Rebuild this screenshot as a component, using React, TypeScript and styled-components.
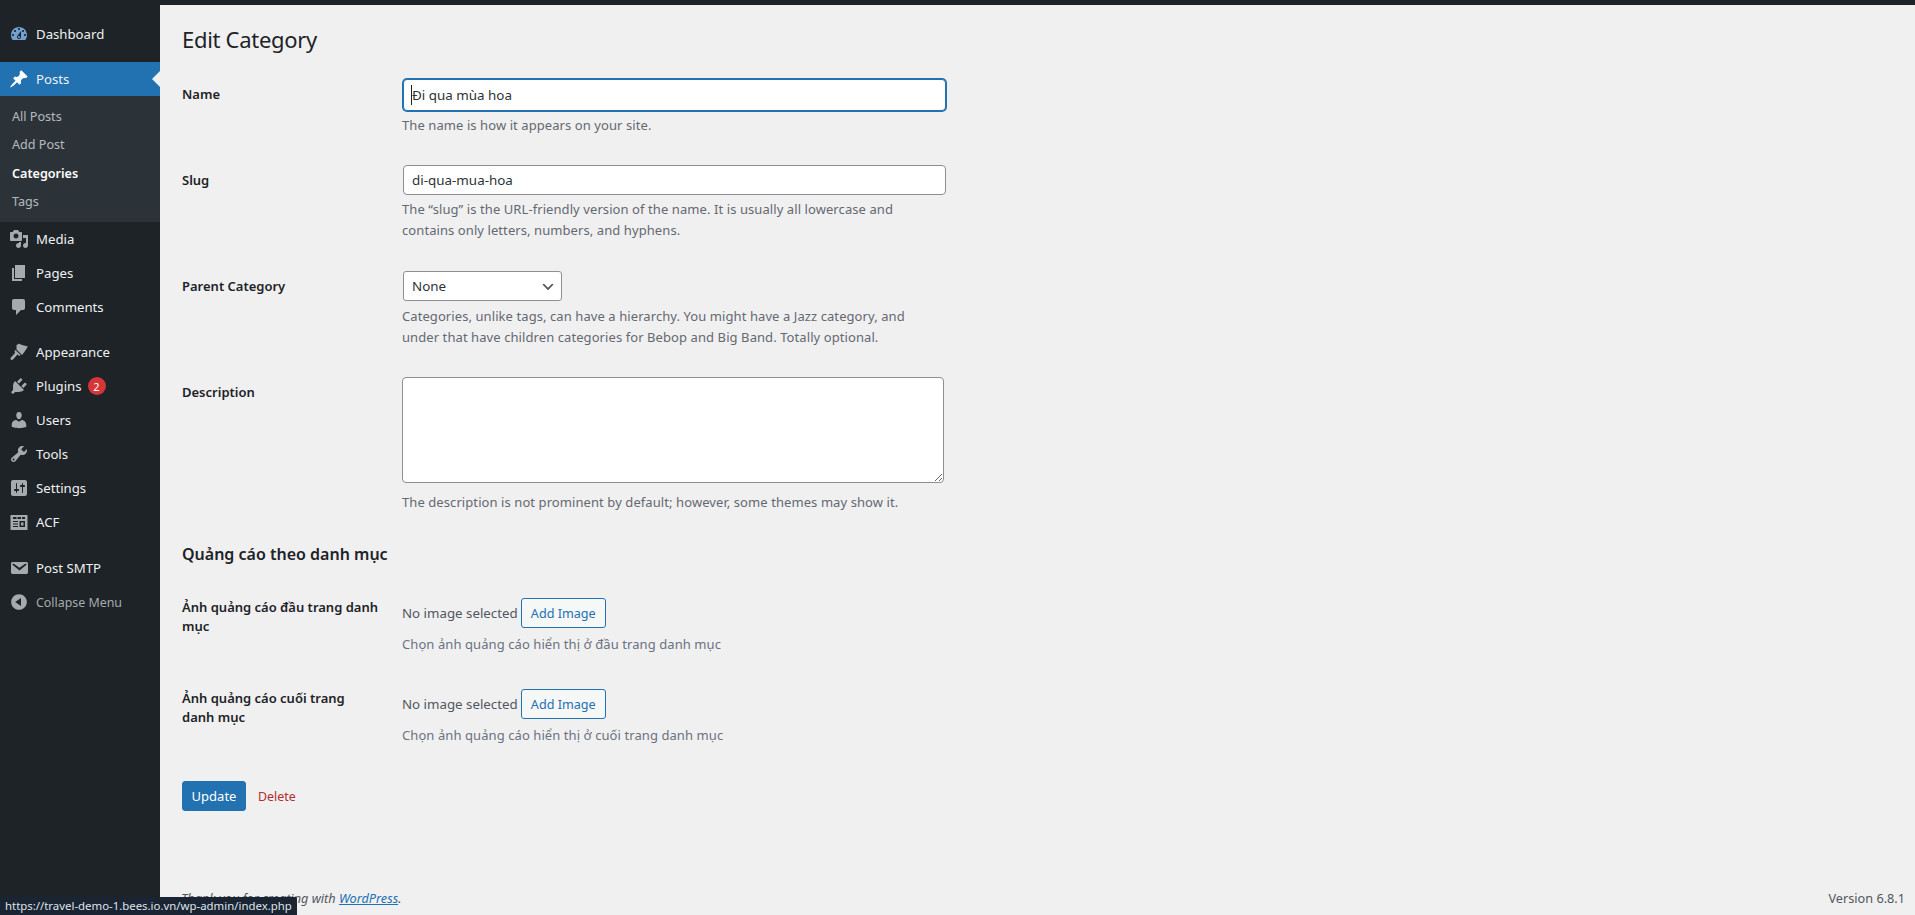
import styled, { createGlobalStyle } from "styled-components";

const GlobalStyle = createGlobalStyle`
  html, body { margin: 0; padding: 0; height: 100%; overflow: hidden; background: #f0f0f1; }
  body {
    font-family: "Noto Sans", "Open Sans", sans-serif;
    font-size: 13px;
    color: #3c434a;
  }
  * { box-sizing: border-box; }
`;

const ICONS: Record<string, string> = {
  dashboard:
    "M3.76 16h12.48c1.1-1.37 1.76-3.11 1.76-5 0-4.42-3.58-8-8-8s-8 3.58-8 8c0 1.89.66 3.63 1.76 5zM10 4c.55 0 1 .45 1 1s-.45 1-1 1-1-.45-1-1 .45-1 1-1zM6 6c.55 0 1 .45 1 1s-.45 1-1 1-1-.45-1-1 .45-1 1-1zm8 0c.55 0 1 .45 1 1s-.45 1-1 1-1-.45-1-1 .45-1 1-1zm-5.37 5.55L12 7v6c0 1.1-.9 2-2 2s-2-.9-2-2c0-.57.24-1.08.63-1.45zM4 10c.55 0 1 .45 1 1s-.45 1-1 1-1-.45-1-1 .45-1 1-1zm12 0c.55 0 1 .45 1 1s-.45 1-1 1-1-.45-1-1 .45-1 1-1zm-5 3c0-.55-.45-1-1-1s-1 .45-1 1 .45 1 1 1 1-.45 1-1z",
  posts:
    "M10.44 3.02l1.82-1.82 6.36 6.35-1.83 1.82c-1.05-.68-2.48-.57-3.41.36l-.75.75c-.92.93-1.04 2.35-.35 3.41l-1.83 1.82-2.41-2.41-2.8 2.79c-.42.42-3.38 2.71-3.8 2.29s1.86-3.39 2.28-3.81l2.79-2.79L4.1 9.36l1.83-1.82c1.05.69 2.48.57 3.4-.36l.75-.75c.93-.92 1.05-2.35.36-3.41z",
  media:
    "M13 11V4c0-.55-.45-1-1-1h-1.67L9 1H5L3.67 3H2c-.55 0-1 .45-1 1v7c0 .55.45 1 1 1h10c.55 0 1-.45 1-1zM7 4.5c1.38 0 2.5 1.12 2.5 2.5S8.38 9.5 7 9.5 4.5 8.38 4.5 7 5.62 4.5 7 4.5zM14 6h5v10.5c0 1.38-1.12 2.5-2.5 2.5S14 17.88 14 16.5s1.12-2.5 2.5-2.5c.17 0 .34.02.5.05V9h-3V6zm-4 8.05V13h2v3.5c0 1.38-1.12 2.5-2.5 2.5S7 17.88 7 16.5 8.12 14 9.5 14c.17 0 .34.02.5.05z",
  pages: "M6 15V2h10v13H6zm-1 1h8v2H3V5h2v11z",
  comments:
    "M5 2h9c1.1 0 2 .9 2 2v7c0 1.1-.9 2-2 2h-2l-5 5v-5H5c-1.1 0-2-.9-2-2V4c0-1.1.9-2 2-2z",
  appearance:
    "M7.5 3L10 1.8c2.5 1.2 5 1.7 8.8 2.7C17.3 7.3 15.2 10.3 13 13L7.5 7.5zM6.5 8l5 5-1 1-2-1.5-4.5 5c-1 1-3 .5-2.5-1.5l4.5-5-.5-2z",
  plugins:
    "M13.11 4.36L9.87 7.6 8 5.73l3.24-3.24c.35-.34 1.05-.2 1.56.32.52.51.66 1.21.31 1.55zm-8 1.77l.91-1.12 9.01 9.01-1.19.84c-.71.71-2.63 1.16-3.82 1.16H6.14L4.9 17.26c-.59.59-1.54.59-2.12 0-.59-.58-.59-1.53 0-2.12l1.24-1.24v-3.88c0-1.13.4-3.19 1.09-3.89zm7.26 3.97l3.24-3.24c.34-.35 1.04-.21 1.55.31.52.51.66 1.21.31 1.55l-3.24 3.25z",
  users:
    "M10 9.25c-2.27 0-2.73-3.44-2.73-3.44C7 4.02 7.82 2 9.97 2c2.16 0 2.98 2.02 2.71 3.81 0 0-.41 3.44-2.68 3.44zm0 2.57L12.72 10c2.39 0 4.52 2.33 4.52 4.53v2.49s-3.65 1.13-7.24 1.13c-3.65 0-7.24-1.13-7.24-1.13v-2.49c0-2.25 1.94-4.48 4.47-4.48z",
  tools:
    "M16.68 9.77c-1.34 1.34-3.3 1.67-4.95.99l-5.41 6.52c-.99.99-2.59.99-3.58 0s-.99-2.59 0-3.57l6.52-5.42c-.68-1.65-.35-3.61.99-4.95 1.28-1.28 3.12-1.62 4.72-1.06l-2.89 2.89 2.82 2.82 2.86-2.87c.53 1.58.18 3.39-1.08 4.65zM3.81 16.21c.4.39 1.04.39 1.43 0 .4-.4.4-1.04 0-1.43-.39-.4-1.03-.4-1.43 0-.39.39-.39 1.03 0 1.43z",
  settings:
    "M18 16V4c0-1.1-.9-2-2-2H4c-1.1 0-2 .9-2 2v12c0 1.1.9 2 2 2h12c1.1 0 2-.9 2-2zM8 11h1c.55 0 1 .45 1 1s-.45 1-1 1H8v1.5c0 .28-.22.5-.5.5s-.5-.22-.5-.5V13H6c-.55 0-1-.45-1-1s.45-1 1-1h1V5.5c0-.28.22-.5.5-.5s.5.22.5.5V11zm5-2h-1c-.55 0-1-.45-1-1s.45-1 1-1h1V5.5c0-.28.22-.5.5-.5s.5.22.5.5V7h1c.55 0 1 .45 1 1s-.45 1-1 1h-1v5.5c0 .28-.22.5-.5.5s-.5-.22-.5-.5V9z",
  acf:
    "M1.5 3h17v15h-17V3zM4 5v2h3.5V5H4zm4.5 0v2H12V5H8.5zM13 5v2h3V5h-3zM4 9v1h5V9H4zm0 2.5v1h5v-1H4zM4 14v1h5v-1H4zm6.5-5v6H16V9h-5.5zm1.5 1.5h2.5v3H12v-3z",
  email:
    "M3.87 4h13.25C18.37 4 19 4.59 19 5.79v8.42c0 1.19-.63 1.79-1.88 1.79H3.87c-1.25 0-1.88-.6-1.88-1.79V5.79c0-1.2.63-1.79 1.88-1.79zm6.62 8.6l6.74-5.53c.24-.2.43-.66.13-1.07-.29-.41-.82-.42-1.17-.17l-5.7 3.86L4.8 5.83c-.35-.25-.88-.24-1.17.17-.3.41-.11.87.13 1.07z",
  collapse:
    "M10 2.16c4.33 0 7.84 3.51 7.84 7.84s-3.51 7.84-7.84 7.84S2.16 14.33 2.16 10 5.71 2.16 10 2.16zm2 11.72V6.12L6.18 9.97z",
};

const Page = styled.div`
  display: flex;
  height: 915px;
  border-top: 5px solid #1d2327;
`;

const Sidebar = styled.nav`
  width: 160px;
  flex-shrink: 0;
  background: #1d2327;
  margin-top: -5px;
  padding-top: 17px;
`;

const MenuGroup = styled.div<{ $gap?: number }>`
  margin-bottom: ${({ $gap }) => $gap ?? 0}px;
`;

const MenuRow = styled.a<{ $active?: boolean; $dim?: boolean }>`
  position: relative;
  display: flex;
  align-items: center;
  height: 34px;
  background: ${({ $active }) => ($active ? "#2271b1" : "transparent")};
  color: ${({ $dim }) => ($dim ? "#a7aaad" : "#f0f0f1")};
  font-size: ${({ $dim }) => ($dim ? 12.4 : 13.2)}px;

  ${({ $active }) =>
    $active &&
    `&::after {
      content: "";
      position: absolute;
      right: 0;
      top: 50%;
      margin-top: -8px;
      border: 8px solid transparent;
      border-right-color: #f0f0f1;
    }`}
`;

const IconSlot = styled.span`
  width: 36px;
  display: flex;
  justify-content: center;
  padding-left: 1px;
`;

const MenuIcon = styled.svg<{ $color: string }>`
  width: 20px;
  height: 20px;
  fill: ${({ $color }) => $color};
`;

const Badge = styled.span`
  display: inline-flex;
  align-items: center;
  justify-content: center;
  width: 18px;
  height: 18px;
  margin-left: 6px;
  border-radius: 50%;
  background: #d63638;
  color: #fff;
  font-size: 11px;
`;

const SubMenu = styled.div`
  background: #2c3338;
  padding: 7px 0 5px;
`;

const SubItem = styled.a<{ $current?: boolean }>`
  display: block;
  height: 28.4px;
  line-height: 28px;
  padding-left: 12px;
  font-size: 12.6px;
  color: ${({ $current }) => ($current ? "#fff" : "rgba(240, 246, 252, 0.7)")};
  font-weight: ${({ $current }) => ($current ? 600 : 400)};
`;

const Main = styled.main`
  position: relative;
  flex: 1;
  display: flex;
  flex-direction: column;
  padding: 0 10px 0 22px;
`;

const Title = styled.h1`
  margin: 0;
  height: 74px;
  padding-top: 16px;
  font-size: 22px;
  letter-spacing: -0.3px;
  line-height: 36px;
  font-weight: 400;
  color: #1d2327;
`;

const FieldRow = styled.div<{ $gap?: number }>`
  display: grid;
  grid-template-columns: 220px 545px;
  margin-bottom: ${({ $gap }) => $gap ?? 30}px;
`;

const FieldLabel = styled.label<{ $top?: number }>`
  padding-top: ${({ $top }) => $top ?? 6}px;
  padding-right: 18px;
  font-weight: 600;
  font-size: 13px;
  line-height: 19px;
  color: #1d2327;
`;

const InputWrap = styled.div`
  position: relative;
`;

const TextInput = styled.input<{ $focused?: boolean; $height: number }>`
  display: block;
  width: 543px;
  height: ${({ $height }) => $height}px;
  padding: 0 8px;
  margin-left: 1px;
  font: inherit;
  font-size: 13.4px;
  color: #2c3338;
  background: #fff;
  border: 1px solid ${({ $focused }) => ($focused ? "#2271b1" : "#8c8f94")};
  border-radius: 4px;
  box-shadow: ${({ $focused }) => ($focused ? "0 0 0 1px #2271b1" : "none")};
  outline: none;
`;

const Caret = styled.span`
  position: absolute;
  left: 9px;
  top: 6px;
  width: 1px;
  height: 20px;
  background: #1d2327;
`;

const SelectBox = styled.select`
  display: block;
  width: 159px;
  height: 30px;
  margin-left: 1px;
  padding: 0 24px 0 8px;
  font: inherit;
  font-size: 13.4px;
  color: #2c3338;
  appearance: none;
  border: 1px solid #8c8f94;
  border-radius: 3px;
  background: #fff
    url("data:image/svg+xml;charset=US-ASCII,%3Csvg%20width%3D%2220%22%20height%3D%2220%22%20xmlns%3D%22http%3A%2F%2Fwww.w3.org%2F2000%2Fsvg%22%3E%3Cpath%20d%3D%22M5%206l5%205%205-5%202%201-7%207-7-7%202-1z%22%20fill%3D%22%23555%22%2F%3E%3C%2Fsvg%3E")
    no-repeat right 5px top 55%;
  background-size: 16px 16px;
`;

const TextArea = styled.textarea`
  display: block;
  width: 542px;
  height: 106px;
  font: inherit;
  background: #fff;
  border: 1px solid #8c8f94;
  border-radius: 4px;
  outline: none;
`;

const Help = styled.p<{ $top?: number; $tone?: string }>`
  margin: ${({ $top }) => $top ?? 4}px 0 0;
  max-width: 530px;
  line-height: 21px;
  font-size: 13px;
  letter-spacing: 0.08px;
  color: ${({ $tone }) => $tone ?? "#646970"};
`;

const SectionHeading = styled.h2`
  margin: 0 0 32px;
  font-size: 16px;
  line-height: 24px;
  font-weight: 600;
  color: #1d2327;
`;

const PickerLine = styled.div`
  display: flex;
  align-items: center;
  gap: 3px;
  height: 30px;
  font-size: 13.3px;
  color: #50575e;
`;

const OutlineButton = styled.button`
  height: 30px;
  width: 85px;
  padding: 0;
  font: inherit;
  font-size: 12.6px;
  color: #2271b1;
  background: #f6f7f7;
  border: 1px solid #2271b1;
  border-radius: 3px;
`;

const ActionRow = styled.div`
  display: flex;
  align-items: center;
  gap: 12px;
  margin-top: 1px;
`;

const PrimaryButton = styled.button`
  width: 64px;
  height: 30px;
  padding: 0;
  font: inherit;
  color: #fff;
  background: #2271b1;
  border: 1px solid #2271b1;
  border-radius: 3px;
`;

const DeleteLink = styled.a`
  color: #b32d2e;
  font-size: 12.4px;
`;

const Footer = styled.footer`
  margin-top: auto;
  display: flex;
  justify-content: space-between;
  height: 27px;
  line-height: 20px;
  font-size: 12.7px;
  color: #50575e;
`;

const FooterNote = styled.em`
  margin-left: -1px;
`;

const FooterLink = styled.a`
  color: #2271b1;
  text-decoration: underline;
`;

const StatusBubble = styled.div`
  position: fixed;
  left: 0;
  bottom: 0;
  width: 297px;
  height: 18px;
  padding-left: 5px;
  background: #1a2433;
  color: #dfe3e8;
  font-size: 11.4px;
  line-height: 18px;
  border-top-right-radius: 2px;
  white-space: nowrap;
`;

type MenuEntry = {
  label: string;
  icon: string;
  gap?: number;
  badge?: string;
  dim?: boolean;
};

const beforePosts: MenuEntry[] = [{ label: "Dashboard", icon: "dashboard", gap: 11 }];
const afterPosts: MenuEntry[] = [
  { label: "Media", icon: "media" },
  { label: "Pages", icon: "pages" },
  { label: "Comments", icon: "comments", gap: 11.5 },
  { label: "Appearance", icon: "appearance" },
  { label: "Plugins", icon: "plugins", badge: "2" },
  { label: "Users", icon: "users" },
  { label: "Tools", icon: "tools" },
  { label: "Settings", icon: "settings" },
  { label: "ACF", icon: "acf", gap: 12 },
  { label: "Post SMTP", icon: "email" },
  { label: "Collapse Menu", icon: "collapse", dim: true },
];

const iconColor = (icon: string) =>
  icon === "dashboard" ? "#72a0cf" : "#a7aaad";

const MenuLine = ({ entry }: { entry: MenuEntry }) => (
  <MenuGroup $gap={entry.gap}>
    <MenuRow $dim={entry.dim}>
      <IconSlot>
        <MenuIcon viewBox="0 0 20 20" $color={iconColor(entry.icon)}>
          <path fillRule="evenodd" d={ICONS[entry.icon]} />
        </MenuIcon>
      </IconSlot>
      {entry.label}
      {entry.badge && <Badge>{entry.badge}</Badge>}
    </MenuRow>
  </MenuGroup>
);

const AD_HELP_TONE = "#6b7280";

const App = () => {
  return (
    <>
      <GlobalStyle />
      <Page>
        <Sidebar>
          {beforePosts.map((entry) => (
            <MenuLine key={entry.label} entry={entry} />
          ))}
          <MenuRow $active>
            <IconSlot>
              <MenuIcon viewBox="0 0 20 20" $color="#fff">
                <path d={ICONS.posts} />
              </MenuIcon>
            </IconSlot>
            Posts
          </MenuRow>
          <SubMenu>
            <SubItem>All Posts</SubItem>
            <SubItem>Add Post</SubItem>
            <SubItem $current>Categories</SubItem>
            <SubItem>Tags</SubItem>
          </SubMenu>
          {afterPosts.map((entry) => (
            <MenuLine key={entry.label} entry={entry} />
          ))}
        </Sidebar>

        <Main>
          <Title>Edit Category</Title>

          <FieldRow $gap={29}>
            <FieldLabel>Name</FieldLabel>
            <div>
              <InputWrap>
                <TextInput $focused $height={32} defaultValue="Đi qua mùa hoa" />
                <Caret />
              </InputWrap>
              <Help>The name is how it appears on your site.</Help>
            </div>
          </FieldRow>

          <FieldRow>
            <FieldLabel>Slug</FieldLabel>
            <div>
              <TextInput $height={30} defaultValue="di-qua-mua-hoa" />
              <Help>
                The “slug” is the URL-friendly version of the name. It is usually
                all lowercase and contains only letters, numbers, and hyphens.
              </Help>
            </div>
          </FieldRow>

          <FieldRow $gap={29}>
            <FieldLabel>Parent Category</FieldLabel>
            <div>
              <SelectBox defaultValue="None">
                <option>None</option>
              </SelectBox>
              <Help $top={5}>
                Categories, unlike tags, can have a hierarchy. You might have a
                Jazz category, and under that have children categories for Bebop
                and Big Band. Totally optional.
              </Help>
            </div>
          </FieldRow>

          <FieldRow $gap={29}>
            <FieldLabel>Description</FieldLabel>
            <div>
              <TextArea />
              <Help $top={9}>
                The description is not prominent by default; however, some themes
                may show it.
              </Help>
            </div>
          </FieldRow>

          <SectionHeading>Quảng cáo theo danh mục</SectionHeading>

          <FieldRow $gap={34}>
            <FieldLabel $top={0}>Ảnh quảng cáo đầu trang danh mục</FieldLabel>
            <div>
              <PickerLine>
                No image selected
                <OutlineButton>Add Image</OutlineButton>
              </PickerLine>
              <Help $top={6} $tone={AD_HELP_TONE}>
                Chọn ảnh quảng cáo hiển thị ở đầu trang danh mục
              </Help>
            </div>
          </FieldRow>

          <FieldRow $gap={34}>
            <FieldLabel $top={0}>
              Ảnh quảng cáo cuối trang
              <br />
              danh mục
            </FieldLabel>
            <div>
              <PickerLine>
                No image selected
                <OutlineButton>Add Image</OutlineButton>
              </PickerLine>
              <Help $top={6} $tone={AD_HELP_TONE}>
                Chọn ảnh quảng cáo hiển thị ở cuối trang danh mục
              </Help>
            </div>
          </FieldRow>

          <ActionRow>
            <PrimaryButton>Update</PrimaryButton>
            <DeleteLink>Delete</DeleteLink>
          </ActionRow>

          <Footer>
            <FooterNote>
              Thank you for creating with <FooterLink>WordPress</FooterLink>.
            </FooterNote>
            <span>Version 6.8.1</span>
          </Footer>
        </Main>
      </Page>
      <StatusBubble>https://travel-demo-1.bees.io.vn/wp-admin/index.php</StatusBubble>
    </>
  );
};

export default App;
